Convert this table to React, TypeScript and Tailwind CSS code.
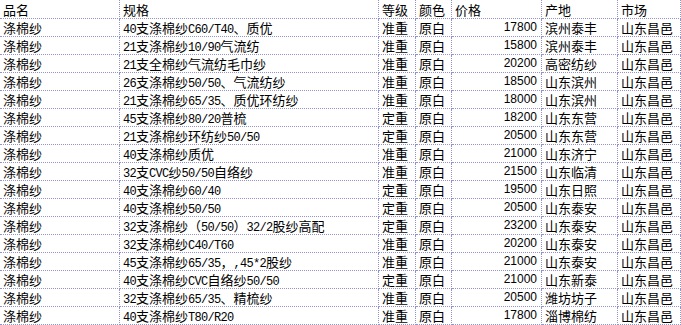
import React from "react";

const rows: [string, string, string, string, string, string, string][] = [
  ["涤棉纱", "40支涤棉纱C60/T40、质优", "准重", "原白", "17800", "滨州泰丰", "山东昌邑"],
  ["涤棉纱", "21支涤棉纱10/90气流纺", "准重", "原白", "15800", "滨州泰丰", "山东昌邑"],
  ["涤棉纱", "21支全棉纱气流纺毛巾纱", "准重", "原白", "20200", "高密纺纱", "山东昌邑"],
  ["涤棉纱", "26支涤棉纱50/50、气流纺纱", "准重", "原白", "18500", "山东滨州", "山东昌邑"],
  ["涤棉纱", "21支涤棉纱65/35、质优环纺纱", "准重", "原白", "18000", "山东滨州", "山东昌邑"],
  ["涤棉纱", "45支涤棉纱80/20普梳", "定重", "原白", "18200", "山东东营", "山东昌邑"],
  ["涤棉纱", "21支涤棉纱环纺纱50/50", "定重", "原白", "20500", "山东东营", "山东昌邑"],
  ["涤棉纱", "40支涤棉纱质优", "准重", "原白", "21000", "山东济宁", "山东昌邑"],
  ["涤棉纱", "32支CVC纱50/50自络纱", "准重", "原白", "21500", "山东临清", "山东昌邑"],
  ["涤棉纱", "40支涤棉纱60/40", "定重", "原白", "19500", "山东日照", "山东昌邑"],
  ["涤棉纱", "40支涤棉纱50/50", "定重", "原白", "20500", "山东泰安", "山东昌邑"],
  ["涤棉纱", "32支涤棉纱（50/50）32/2股纱高配", "定重", "原白", "23200", "山东泰安", "山东昌邑"],
  ["涤棉纱", "32支涤棉纱C40/T60", "准重", "原白", "20200", "山东泰安", "山东昌邑"],
  ["涤棉纱", "45支涤棉纱65/35，,45*2股纱", "准重", "原白", "21000", "山东泰安", "山东昌邑"],
  ["涤棉纱", "40支涤棉纱CVC自络纱50/50", "定重", "原白", "21000", "山东新泰", "山东昌邑"],
  ["涤棉纱", "32支涤棉纱65/35、精梳纱", "准重", "原白", "20500", "潍坊坊子", "山东昌邑"],
  ["涤棉纱", "40支涤棉纱T80/R20", "准重", "原白", "17800", "淄博棉纺", "山东昌邑"],
];

const header = ["品名", "规格", "等级", "颜色", "价格", "产地", "市场"];

function Spec({ text }: { text: string }) {
  const parts = text.match(/[\x20-\x7e]+|[^\x20-\x7e]+/g) || [];
  return (
    <>
      {parts.map((p, i) =>
        /^[\x20-\x7e]+$/.test(p) ? (
          <span key={i} className="font-['Liberation_Mono',monospace] text-[12px] tracking-[-0.7px]">
            {p}
          </span>
        ) : (
          <span key={i}>{p}</span>
        )
      )}
    </>
  );
}

const cell =
  "border-r border-b border-dotted border-[#9494cc] pl-[3px] whitespace-nowrap overflow-hidden leading-[17px]";

export default function App() {
  return (
    <div className="w-[681px] h-[325px] bg-white overflow-hidden text-black text-[13px] font-['Noto_Sans_CJK_SC',sans-serif]">
      <div className="grid grid-cols-[120px_259px_37px_36px_90px_76px_63px]">
        {header.map((h, i) => (
          <div key={i} className={`${cell} h-[19px] pt-[1px]`}>
            {h}
          </div>
        ))}
        {rows.map((r, ri) => (
          <React.Fragment key={ri}>
            <div className={`${cell} h-[18px]`}>{r[0]}</div>
            <div className={`${cell} h-[18px]`}>
              <Spec text={r[1]} />
            </div>
            <div className={`${cell} h-[18px]`}>{r[2]}</div>
            <div className={`${cell} h-[18px]`}>{r[3]}</div>
            <div className={`${cell} h-[18px] text-right pr-[4px] font-['Liberation_Sans',sans-serif] text-[12px]`}>
              {r[4]}
            </div>
            <div className={`${cell} h-[18px]`}>{r[5]}</div>
            <div className={`${cell} h-[18px]`}>{r[6]}</div>
          </React.Fragment>
        ))}
      </div>
    </div>
  );
}
